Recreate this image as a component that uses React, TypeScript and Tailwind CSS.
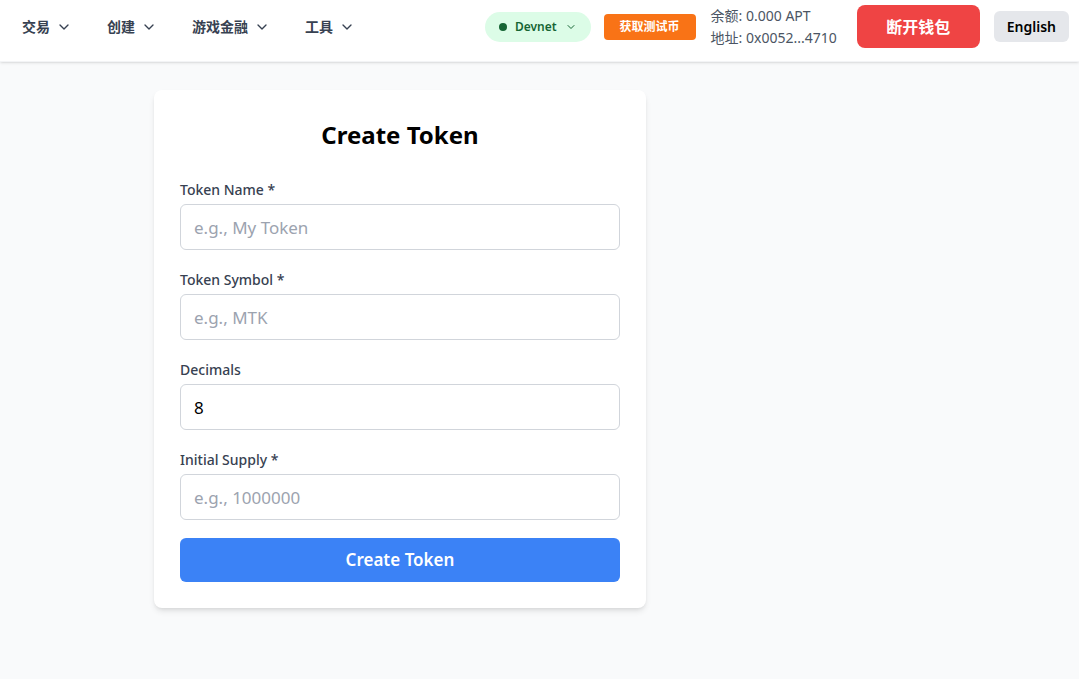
import React from "react";

const Chevron = ({ className = "" }: { className?: string }) => (
  <svg className={className} viewBox="0 0 24 24" fill="none" stroke="currentColor" strokeWidth={2} strokeLinecap="round" strokeLinejoin="round">
    <path d="M6 9l6 6 6-6" />
  </svg>
);

const font = { fontFamily: '"Noto Sans", "Noto Sans CJK SC", sans-serif' };

function Field({ label, placeholder, value }: { label: string; placeholder?: string; value?: string }) {
  return (
    <div className="flex flex-col">
      <label className="text-[14px] leading-[20px] font-medium text-[#374151] mb-1">{label}</label>
      <input
        className="h-[46px] w-full rounded-md border border-[#d1d5db] bg-white px-[13px] text-[17px] text-black placeholder:text-[#9ca3af] outline-none"
        placeholder={placeholder}
        defaultValue={value}
      />
    </div>
  );
}

export default function App() {
  return (
    <div className="min-h-[679px] bg-[#f9fafb]" style={font}>
      <header className="h-[62px] bg-white shadow-sm border-b border-gray-100 flex items-center pl-[22px] pr-[10px] pb-[8px]">
        <nav className="flex items-center gap-[35px]">
          {["交易", "创建", "游戏金融", "工具"].map((t) => (
            <div key={t} className="flex items-center gap-[6px] text-[14px] font-semibold text-[#374151]">
              <span>{t}</span>
              <Chevron className="w-[16px] h-[16px]" />
            </div>
          ))}
        </nav>
        <div className="ml-auto flex items-center">
          <div className="flex items-center h-[30px] px-[14px] rounded-full bg-[#dcfce7] text-[#166534] text-[12px] font-semibold gap-[8px]">
            <span className="w-[8px] h-[8px] rounded-full bg-[#166534]" />
            <span>Devnet</span>
            <Chevron className="w-[12px] h-[12px]" />
          </div>
          <div className="ml-[13px] h-[26px] px-[16px] flex items-center rounded bg-[#f97316] text-white text-[12px] font-bold">
            获取测试币
          </div>
          <div className="ml-[15px] flex flex-col text-[14px] leading-[22px] text-[#4b5563]">
            <span>余额: 0.000 APT</span>
            <span>地址: 0x0052...4710</span>
          </div>
          <button className="ml-[20px] h-[43px] w-[123px] rounded-lg bg-[#ef4444] text-white text-[16px] font-bold">
            断开钱包
          </button>
          <button className="ml-[14px] h-[31px] px-[13px] rounded-md bg-[#e5e7eb] text-black text-[14px] font-semibold">
            English
          </button>
        </div>
      </header>
      <main className="pl-[154px] pt-[28px]">
        <div className="w-[492px] bg-white rounded-lg shadow-md px-[26px] pt-[27px] pb-[26px]">
          <h1 className="text-center text-[24px] leading-[36px] font-bold text-black mb-[27px]">Create Token</h1>
          <div className="flex flex-col gap-[20px]">
            <Field label="Token Name *" placeholder="e.g., My Token" />
            <Field label="Token Symbol *" placeholder="e.g., MTK" />
            <Field label="Decimals" value="8" />
            <Field label="Initial Supply *" placeholder="e.g., 1000000" />
          </div>
          <button className="mt-[18px] w-full h-[44px] rounded-md bg-[#3b82f6] text-white text-[17px] font-semibold">
            Create Token
          </button>
        </div>
      </main>
    </div>
  );
}
